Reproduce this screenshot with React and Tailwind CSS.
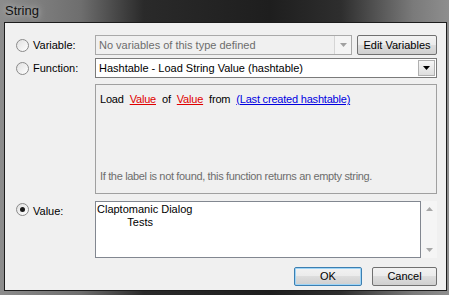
import React from 'react'

function Radio({ checked }) {
  return (
    <span className="relative inline-block w-[13px] h-[13px] rounded-full border border-[#8a8a8a] bg-[linear-gradient(135deg,#e0e0e0,#ffffff)] shrink-0">
      {checked && <span className="absolute left-[3px] top-[3px] w-[5px] h-[5px] rounded-full bg-[#1a1a1a]" />}
    </span>
  )
}

function Arrow({ color = '#000' }) {
  return (
    <svg width="7" height="4" viewBox="0 0 7 4"><path d="M0 0h7L3.5 4z" fill={color} /></svg>
  )
}

function Label({ checked, children }) {
  return (
    <div className="w-[90px] shrink-0 flex items-center pl-[11px] gap-[4px]">
      <Radio checked={checked} />
      <span>{children}</span>
    </div>
  )
}

export default function App() {
  return (
    <div className="w-[449px] h-[295px] flex flex-col bg-[linear-gradient(to_right,#8c8c8c_0%,#6e6e6e_18%,#2a2a2a_32%,#1e1e1e_60%,#2e2e2e_76%,#7a7a7a_92%,#8e8e8e_100%)] font-['Liberation_Sans',Arial,sans-serif] text-[11px] text-black overflow-hidden">
      <div className="h-[22px] shrink-0 flex items-center pl-[5px] text-[13px] text-[#111] [text-shadow:0_0_6px_#d0d0d0]">
        String
      </div>
      <div className="ml-[4px] mr-[2px] h-[269px] bg-[#f0f0f0] border border-[#1c1c1c] flex flex-col pt-[12px] pr-[9px]">
        {/* Variable */}
        <div className="flex items-center h-[20px]">
          <Label>Variable:</Label>
          <div className="flex-1 h-[20px] flex items-center border border-[#a9a9a9] bg-[#f0f0f0] pl-[3px] text-[#6d6d6d]">
            <span className="flex-1">No variables of this type defined</span>
            <span className="w-[17px] h-[18px] border-l border-[#d5d5d5] flex items-center justify-center bg-[#f4f4f4]">
              <Arrow color="#a0a0a0" />
            </span>
          </div>
          <button className="ml-[5px] w-[80px] h-[20px] rounded-[2px] border border-[#707070] bg-[linear-gradient(#f2f2f2,#ebebeb_50%,#dddddd_50%,#cfcfcf)] text-[11px]">
            Edit Variables
          </button>
        </div>
        {/* Function */}
        <div className="flex items-center h-[20px] mt-[3px]">
          <Label>Function:</Label>
          <div className="flex-1 h-[20px] flex items-center border border-[#7a7a7a] bg-white pl-[3px]">
            <span className="flex-1">Hashtable - Load String Value (hashtable)</span>
            <span className="w-[17px] h-[16px] mr-[1px] border border-[#b0b0b0] flex items-center justify-center bg-[linear-gradient(#f6f6f6,#dedede)]">
              <Arrow />
            </span>
          </div>
        </div>
        {/* Description */}
        <div className="flex mt-[6px]">
          <div className="w-[90px] shrink-0" />
          <div className="flex-1 h-[110px] border border-[#a0a0a0] bg-[#f0f0f0] flex flex-col justify-between pl-[4px] pt-[6px] pb-[9px]">
            <div className="flex gap-[6px] tracking-[-0.2px]">
              <span>Load</span>
              <span className="text-[#e00000] underline">Value</span>
              <span>of</span>
              <span className="text-[#e00000] underline">Value</span>
              <span>from</span>
              <span className="text-[#0000e0] underline">(Last created hashtable)</span>
            </div>
            <div className="text-[#6d6d6d] tracking-[-0.34px]">If the label is not found, this function returns an empty string.</div>
          </div>
        </div>
        {/* Value */}
        <div className="flex mt-[7px]">
          <div className="w-[90px] shrink-0 flex items-start pl-[11px] gap-[4px] pt-[2px]">
            <Radio checked />
            <span>Value:</span>
          </div>
          <div className="flex-1 h-[57px] border border-[#828790] bg-white pl-[1px] pt-[1px] leading-[13px] whitespace-pre">
            {'Claptomanic Dialog\n          Tests'}
          </div>
          <div className="w-[16px] h-[57px] bg-[#f5f5f5] flex flex-col items-center justify-between py-[6px]">
            <svg width="7" height="4" viewBox="0 0 7 4"><path d="M0 4h7L3.5 0z" fill="#a8a8a8" /></svg>
            <Arrow color="#a8a8a8" />
          </div>
        </div>
        {/* Buttons */}
        <div className="flex justify-end gap-[10px] mt-[9px]">
          <button className="w-[68px] h-[19px] rounded-[2px] border border-[#3c7fb1] shadow-[inset_0_0_0_1px_#9fd5f7] bg-[linear-gradient(#f2f2f2,#ebebeb_50%,#dddddd_50%,#cfcfcf)] text-[11px]">
            OK
          </button>
          <button className="w-[65px] h-[19px] rounded-[2px] border border-[#707070] bg-[linear-gradient(#f2f2f2,#ebebeb_50%,#dddddd_50%,#cfcfcf)] text-[11px]">
            Cancel
          </button>
        </div>
      </div>
    </div>
  )
}
